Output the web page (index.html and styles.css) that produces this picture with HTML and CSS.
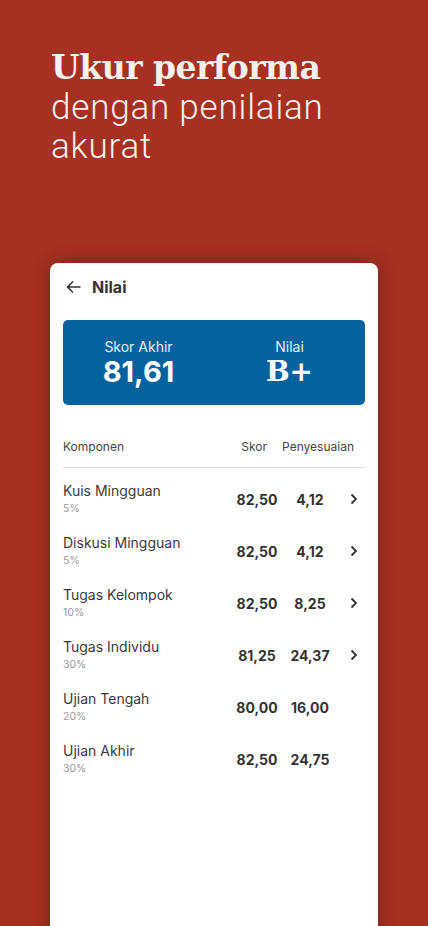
FILE: index.html
```html
<!DOCTYPE html>
<html lang="id">
<head>
    <meta charset="UTF-8">
    <meta name="viewport" content="width=device-width, initial-scale=1.0">
    <title>Nilai</title>
    <link rel="stylesheet" href="styles.css">
</head>
<body>
    <div class="hero">
        <h1 class="hero-title">Ukur performa</h1>
        <p class="hero-sub">dengan penilaian<br>akurat</p>
    </div>

    <div class="card">
        <div class="card-header">
            <svg class="back" width="15" height="14" viewBox="0 0 15 14">
                <path d="M14.5 7H1.5M7 1.5L1.5 7 7 12.5" fill="none" stroke="#333" stroke-width="1.6"/>
            </svg>
            <span class="card-title">Nilai</span>
        </div>

        <div class="summary">
            <div class="summary-item">
                <div class="summary-label">Skor Akhir</div>
                <div class="summary-value">81,61</div>
            </div>
            <div class="summary-item">
                <div class="summary-label">Nilai</div>
                <div class="summary-value grade">B+</div>
            </div>
        </div>

        <div class="table-head">
            <span class="col-name">Komponen</span>
            <span class="col-skor">Skor</span>
            <span class="col-adj">Penyesuaian</span>
        </div>

        <div class="row">
            <div class="name"><div class="title">Kuis Mingguan</div><div class="pct">5%</div></div>
            <div class="val">82,50</div>
            <div class="val">4,12</div>
            <div class="go"><svg width="8" height="12" viewBox="0 0 8 12"><path d="M1.5 1.5L6 6l-4.5 4.5" fill="none" stroke="#333" stroke-width="1.8"/></svg></div>
        </div>
        <div class="row">
            <div class="name"><div class="title">Diskusi Mingguan</div><div class="pct">5%</div></div>
            <div class="val">82,50</div>
            <div class="val">4,12</div>
            <div class="go"><svg width="8" height="12" viewBox="0 0 8 12"><path d="M1.5 1.5L6 6l-4.5 4.5" fill="none" stroke="#333" stroke-width="1.8"/></svg></div>
        </div>
        <div class="row">
            <div class="name"><div class="title">Tugas Kelompok</div><div class="pct">10%</div></div>
            <div class="val">82,50</div>
            <div class="val">8,25</div>
            <div class="go"><svg width="8" height="12" viewBox="0 0 8 12"><path d="M1.5 1.5L6 6l-4.5 4.5" fill="none" stroke="#333" stroke-width="1.8"/></svg></div>
        </div>
        <div class="row">
            <div class="name"><div class="title">Tugas Individu</div><div class="pct">30%</div></div>
            <div class="val">81,25</div>
            <div class="val">24,37</div>
            <div class="go"><svg width="8" height="12" viewBox="0 0 8 12"><path d="M1.5 1.5L6 6l-4.5 4.5" fill="none" stroke="#333" stroke-width="1.8"/></svg></div>
        </div>
        <div class="row">
            <div class="name"><div class="title">Ujian Tengah</div><div class="pct">20%</div></div>
            <div class="val">80,00</div>
            <div class="val">16,00</div>
            <div class="go"></div>
        </div>
        <div class="row">
            <div class="name"><div class="title">Ujian Akhir</div><div class="pct">30%</div></div>
            <div class="val">82,50</div>
            <div class="val">24,75</div>
            <div class="go"></div>
        </div>
    </div>
</body>
</html>
```

FILE: styles.css
```css
html, body {
    height: 100%;
}
body {
    margin: 0;
    background-color: #a63022;
    font-family: Inter, "Noto Sans", sans-serif;
    overflow: hidden;
}
.hero {
    box-sizing: border-box;
    height: 263px;
    padding: 48px 51px 0;
    color: #f6f0ee;
}
.hero-title {
    margin: 0;
    font-family: "DejaVu Serif", serif;
    font-weight: 700;
    font-size: 33px;
    line-height: 40px;
    letter-spacing: -0.5px;
}
.hero-sub {
    margin: 0;
    font-family: Roboto, sans-serif;
    font-weight: 300;
    font-size: 35px;
    line-height: 39px;
    letter-spacing: 0.8px;
}
.card {
    margin: 0 50px;
    height: 700px;
    padding: 0 13px;
    background-color: #fff;
    border-radius: 8px;
    box-shadow: 0 0 18px rgba(0, 0, 0, 0.3);
}
.card-header {
    display: flex;
    align-items: center;
    height: 24px;
    padding-top: 12px;
}
.back {
    margin-left: 3px;
}
.card-title {
    margin-left: 11px;
    font-size: 16px;
    font-weight: 700;
    color: #333;
}
.summary {
    display: flex;
    margin-top: 21px;
    padding: 18px 0 17px;
    background-color: #05629f;
    border-radius: 5px;
    color: #fff;
}
.summary-item {
    flex: 1;
    text-align: center;
}
.summary-label {
    font-size: 14px;
    line-height: 18px;
    color: #e6eef5;
}
.summary-value {
    font-size: 29px;
    font-weight: 700;
    line-height: 32px;
}
.summary-value.grade {
    font-family: "DejaVu Serif", serif;
    font-size: 28px;
}
.table-head {
    display: flex;
    margin-top: 32px;
    padding-bottom: 10px;
    border-bottom: 1px solid #dcdcdc;
    font-size: 12px;
    line-height: 20px;
    color: #444;
}
.col-name {
    flex: 1;
}
.col-skor {
    margin-right: 15px;
}
.col-adj {
    margin-right: 11px;
}
.row {
    display: grid;
    grid-template-columns: 1fr 56px 50px 30px;
    align-items: center;
    padding: 13px 0 3px;
}
.title {
    font-size: 14px;
    line-height: 20px;
    color: #3a3a3a;
}
.pct {
    font-size: 10.5px;
    line-height: 16px;
    color: #999;
}
.val {
    text-align: center;
    font-size: 14px;
    font-weight: 700;
    color: #333;
}
.go {
    display: flex;
    justify-content: flex-end;
    padding-right: 7px;
}
```
